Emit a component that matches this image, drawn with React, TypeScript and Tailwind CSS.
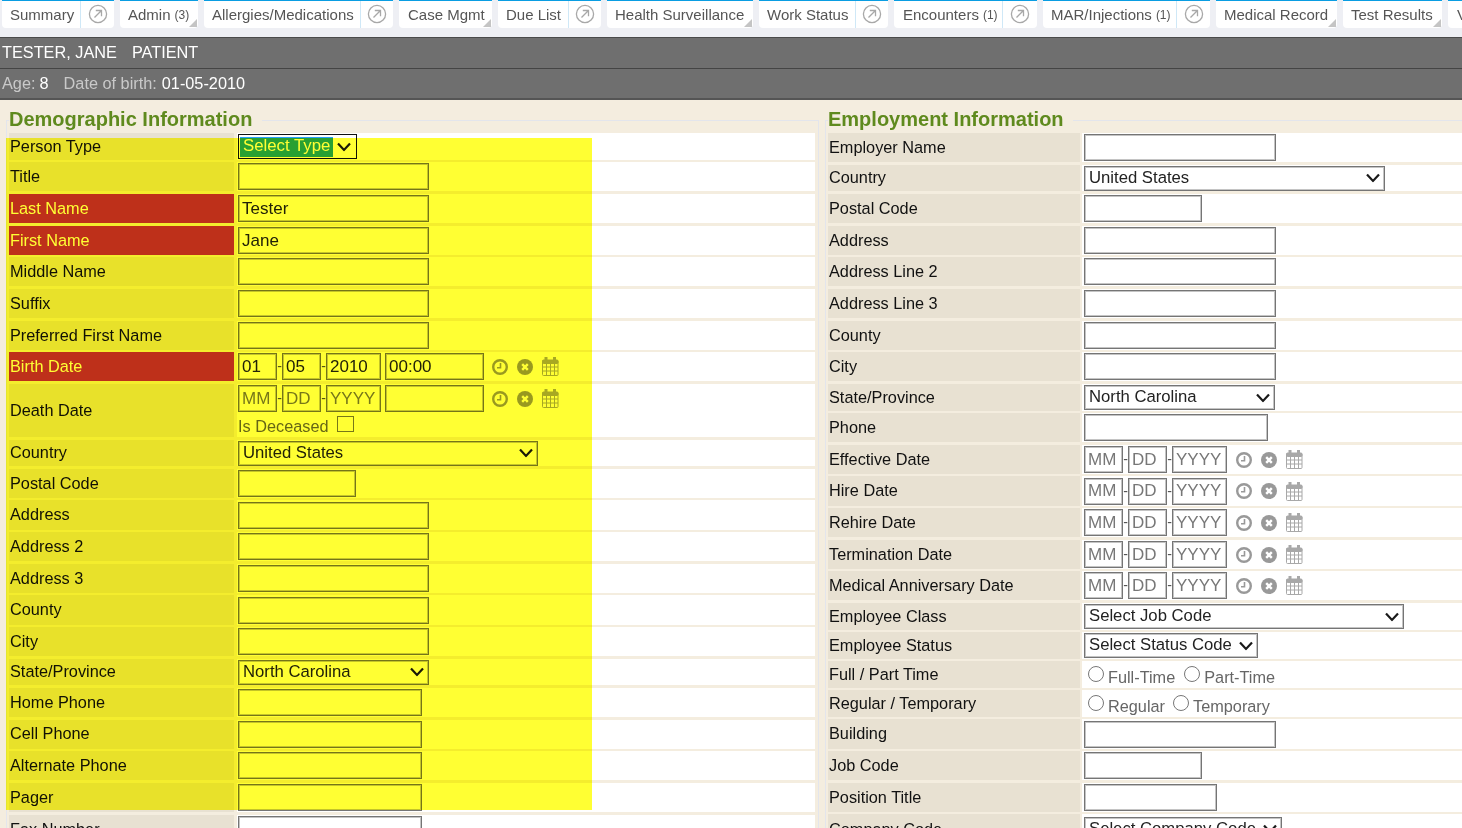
const FONT = "font-['Liberation_Sans',Arial,sans-serif]";

const tabs = [
  { label: 'Summary', w: 'w-[112px]', main: 'w-[79px]', pl: 'pl-[8px]', icon: true },
  { label: 'Admin', count: '(3)', w: 'w-[78px]', pl: 'pl-[8px]', menu: true },
  { label: 'Allergies/Medications', w: 'w-[189px]', main: 'w-[157px]', pl: 'pl-[8px]', icon: true },
  { label: 'Case Mgmt', w: 'w-[93px]', pl: 'pl-[9px]', menu: true },
  { label: 'Due List', w: 'w-[103px]', main: 'w-[71px]', pl: 'pl-[8px]', icon: true },
  { label: 'Health Surveillance', w: 'w-[146px]', pl: 'pl-[8px]', menu: true },
  { label: 'Work Status', w: 'w-[129px]', main: 'w-[97px]', pl: 'pl-[8px]', icon: true },
  { label: 'Encounters', count: '(1)', w: 'w-[143px]', main: 'w-[109px]', pl: 'pl-[9px]', icon: true },
  { label: 'MAR/Injections', count: '(1)', w: 'w-[167px]', main: 'w-[134px]', pl: 'pl-[8px]', icon: true },
  { label: 'Medical Record', w: 'w-[121px]', pl: 'pl-[8px]', menu: true },
  { label: 'Test Results', w: 'w-[99px]', pl: 'pl-[8px]', menu: true },
  { label: 'View', w: 'w-[100px]', pl: 'pl-[9px]' },
];

function OpenIcon() {
  return (
    <svg width="20" height="20" viewBox="0 0 20 20" fill="none" stroke="#a8a8a8" strokeWidth="1.3">
      <circle cx="10" cy="10" r="8.6" />
      <path d="M6.5 13.5 L13.2 6.8 M7.8 6.5 H13.5 V12.2" />
    </svg>
  );
}

function Tab({ t }: { t: (typeof tabs)[number] }) {
  return (
    <div className={`relative flex h-[28px] shrink-0 rounded-b-[4px] border-t border-[#0a9de2] bg-white text-[15px] text-[#555] ${t.w}`}>
      <div className={`flex h-full items-center whitespace-nowrap pt-[1px] ${t.pl} ${t.main ? `${t.main} border-r border-[#cfe8f7]` : ''}`}>
        {t.label}
        {t.count && <span className="ml-[4px] text-[12px]">{t.count}</span>}
      </div>
      {t.icon && (
        <div className="flex flex-1 items-center justify-center pb-[1px]">
          <OpenIcon />
        </div>
      )}
      {t.menu && (
        <svg className="absolute bottom-[1px] right-[1px]" width="8" height="8" viewBox="0 0 8 8">
          <polygon points="8,0 8,8 0,8" fill="#c4c4c4" />
        </svg>
      )}
    </div>
  );
}

function TextBox({ w, value, placeholder }: { w: string; value?: string; placeholder?: string }) {
  return (
    <input
      readOnly
      defaultValue={value}
      placeholder={placeholder}
      className={`h-[27px] shrink-0 border border-[#757575] bg-white pl-[3px] text-[17px] text-[#222] shadow-[inset_0_0_0_1px_#c4c4c4] outline-none placeholder:text-[#777] ${w}`}
    />
  );
}

function Chevron() {
  return (
    <svg className="pointer-events-none absolute right-[5px] top-1/2 -translate-y-1/2" width="14" height="9" viewBox="0 0 14 9" fill="none" stroke="#1a1a1a" strokeWidth="2.2">
      <path d="M1 1 L7 7.5 L13 1" />
    </svg>
  );
}

function Dropdown({ w, value }: { w: string; value: string }) {
  return (
    <div className={`relative h-[25px] shrink-0 ${w}`}>
      <select className="h-full w-full appearance-none rounded-none border border-[#757575] bg-white pl-[4px] text-[16.7px] leading-none text-[#222] shadow-[inset_0_0_0_1px_#c4c4c4] outline-none">
        <option>{value}</option>
      </select>
      <Chevron />
    </div>
  );
}

function ClockIcon() {
  return (
    <svg width="16" height="16" viewBox="0 0 16 16" fill="none" stroke="#999" strokeWidth="2.4">
      <circle cx="8" cy="8" r="6.8" />
      <path d="M8.5 4 V8.8 H5" strokeWidth="1.6" />
    </svg>
  );
}

function ClearIcon() {
  return (
    <svg width="16" height="16" viewBox="0 0 16 16">
      <circle cx="8" cy="8" r="8" fill="#999" />
      <path d="M5.2 5.2 L10.8 10.8 M10.8 5.2 L5.2 10.8" stroke="#fff" strokeWidth="2.4" />
    </svg>
  );
}

function CalendarIcon() {
  return (
    <svg width="17" height="19" viewBox="0 0 17 19" fill="none" stroke="#a8a8a8">
      <rect x="0.5" y="3.5" width="15.5" height="15" rx="1" fill="#fff" fillOpacity="0.2" />
      <rect x="0.5" y="3" width="15.5" height="3.5" rx="1" fill="#a8a8a8" />
      <path d="M0.5 10 H16 M0.5 14 H16 M4.5 6 V18.5 M8.5 6 V18.5 M12.5 6 V18.5" />
      <rect x="3" y="0.5" width="2" height="4" fill="#a8a8a8" />
      <rect x="11.5" y="0.5" width="2" height="4" fill="#a8a8a8" />
    </svg>
  );
}

function DateField({ m, d, y, time, gap }: { m?: string; d?: string; y?: string; time?: string | boolean; gap: string }) {
  return (
    <div className="flex items-center">
      <TextBox w="w-[39px]" value={m} placeholder="MM" />
      <span className="w-[5px] text-center text-[14px] text-[#555]">-</span>
      <TextBox w="w-[39px]" value={d} placeholder="DD" />
      <span className="w-[5px] text-center text-[14px] text-[#555]">-</span>
      <TextBox w="w-[55px]" value={y} placeholder="YYYY" />
      {time !== undefined && (
        <div className="ml-[4px]">
          <TextBox w="w-[99px]" value={typeof time === 'string' ? time : undefined} />
        </div>
      )}
      <div className={`flex items-center gap-[9px] ${gap}`}>
        <ClockIcon />
        <ClearIcon />
        <CalendarIcon />
      </div>
    </div>
  );
}

function Radios({ items, second }: { items: string[]; second: string }) {
  return (
    <div className="flex items-center text-[16.3px] text-[#666]">
      <input type="radio" readOnly className="mb-[2px] ml-[4px] h-[16px] w-[16px] appearance-none rounded-full border border-[#777] bg-white" />
      <span className="ml-[4px] mt-[5px]">{items[0]}</span>
      <input type="radio" readOnly className={`mb-[2px] h-[16px] w-[16px] appearance-none rounded-full border border-[#777] bg-white ${second}`} />
      <span className="ml-[4px] mt-[5px]">{items[1]}</span>
    </div>
  );
}

function Row({ label, size, labelW, valuePl, required, nudge, children }: { label: string; size: string; labelW: string; valuePl: string; required?: boolean; nudge?: boolean; children: React.ReactNode }) {
  return (
    <div className={`flex shrink-0 ${size}`}>
      <div className={`flex shrink-0 items-center pl-[1px] text-[16.3px] ${labelW} ${nudge ? 'pb-[2px]' : ''} ${required ? 'bg-[#be3082] text-white' : 'bg-[#e8e1d2] text-[#111]'}`}>
        {label}
      </div>
      <div className={`flex min-w-0 flex-1 flex-col justify-center bg-white ${valuePl}`}>{children}</div>
    </div>
  );
}

function Left({ label, size, required, nudge, children }: { label: string; size: string; required?: boolean; nudge?: boolean; children: React.ReactNode }) {
  return (
    <Row label={label} size={size} labelW="w-[225px] mr-[3px]" valuePl="pl-[1px]" required={required} nudge={nudge}>
      {children}
    </Row>
  );
}

function Right({ label, size, nudge, children }: { label: string; size: string; nudge?: boolean; children: React.ReactNode }) {
  return (
    <Row label={label} size={size} labelW="w-[252px] mr-[2px]" valuePl="pl-[2px]" nudge={nudge}>
      {children}
    </Row>
  );
}

function Section({ title, className, legendPad, children }: { title: string; className: string; legendPad: string; children: React.ReactNode }) {
  return (
    <fieldset className={`mt-[8px] min-w-0 shrink-0 border border-b-0 border-[#e3e5ec] pl-[2px] ${className}`}>
      <legend className={`h-[25px] text-[20px] font-bold leading-[23px] text-[#5f8a1e] ${legendPad}`}>{title}</legend>
      {children}
    </fieldset>
  );
}

export default function App() {
  return (
    <div className={`relative h-[828px] w-[1462px] overflow-hidden bg-[#f4eddf] ${FONT}`}>
      <div className="flex h-[37px] gap-[6px] overflow-hidden bg-[#eeeff4] pl-[2px]">
        {tabs.map(t => (
          <Tab key={t.label} t={t} />
        ))}
      </div>

      <div className="flex h-[32px] items-center border-t border-b border-t-[#4a4a4a] border-b-[#444] bg-[#6f6f6f] pb-[2px] pl-[2px] text-[16.3px] text-white">
        <span>TESTER, JANE</span>
        <span className="ml-[15px]">PATIENT</span>
      </div>
      <div className="flex h-[31px] items-center border-b-2 border-b-[#555] bg-[#6f6f6f] pl-[2px] text-[16.3px] text-white">
        <span className="text-[#c9c9c9]">Age:</span>
        <span className="ml-[4px]">8</span>
        <span className="ml-[15px] text-[#c9c9c9]">Date of birth:</span>
        <span className="ml-[5px]">01-05-2010</span>
      </div>

      <div className="relative ml-[6px] flex gap-[6px]">
        <Section title="Demographic Information" className="w-[813px] pr-[3px]" legendPad="pr-[10px]">
          <div className="flex flex-col">
            <Left label="Person Type" size="h-[27px] mb-[2px]">
              <div className="relative flex h-[25px] w-[119px] items-center border border-[#111] bg-white pl-[1px]">
                <select className="h-[20px] w-[93px] appearance-none rounded-none bg-[#28a0fa] pl-[3px] text-[16.8px] leading-none text-white outline-none">
                  <option>Select Type</option>
                </select>
                <Chevron />
              </div>
            </Left>
            <Left label="Title" size="h-[29px] mb-[3px]"><TextBox w="w-[191px]" /></Left>
            <Left label="Last Name" size="h-[29px] mb-[3px]" required><TextBox w="w-[191px]" value="Tester" /></Left>
            <Left label="First Name" size="h-[29px] mb-[2px]" required><TextBox w="w-[191px]" value="Jane" /></Left>
            <Left label="Middle Name" size="h-[29px] mb-[3px]"><TextBox w="w-[191px]" /></Left>
            <Left label="Suffix" size="h-[29px] mb-[3px]"><TextBox w="w-[191px]" /></Left>
            <Left label="Preferred First Name" size="h-[29px] mb-[2px]"><TextBox w="w-[191px]" /></Left>
            <Left label="Birth Date" size="h-[29px] mb-[3px]" required>
              <DateField m="01" d="05" y="2010" time="00:00" gap="ml-[8px]" />
            </Left>
            <Left label="Death Date" size="h-[53px] mb-[3px]">
              <div className="flex h-full flex-col pt-[1px]">
                <DateField time gap="ml-[8px]" />
                <div className="mt-[2px] flex items-center text-[16.3px] text-[#666]">
                  Is Deceased
                  <span className="mb-[5px] ml-[8px] h-[16px] w-[17px] border border-[#777] bg-white" />
                </div>
              </div>
            </Left>
            <Left label="Country" size="h-[26px] mb-[3px]" nudge><Dropdown w="w-[300px]" value="United States" /></Left>
            <Left label="Postal Code" size="h-[29px] mb-[2px]"><TextBox w="w-[118px]" /></Left>
            <Left label="Address" size="h-[30px] mb-[2px]" nudge><TextBox w="w-[191px]" /></Left>
            <Left label="Address 2" size="h-[29px] mb-[3px]"><TextBox w="w-[191px]" /></Left>
            <Left label="Address 3" size="h-[29px] mb-[2px]"><TextBox w="w-[191px]" /></Left>
            <Left label="County" size="h-[30px] mb-[2px]" nudge><TextBox w="w-[191px]" /></Left>
            <Left label="City" size="h-[29px] mb-[3px]"><TextBox w="w-[191px]" /></Left>
            <Left label="State/Province" size="h-[26px] mb-[3px]" nudge><Dropdown w="w-[191px]" value="North Carolina" /></Left>
            <Left label="Home Phone" size="h-[29px] mb-[3px]"><TextBox w="w-[184px]" /></Left>
            <Left label="Cell Phone" size="h-[29px] mb-[2px]" nudge><TextBox w="w-[184px]" /></Left>
            <Left label="Alternate Phone" size="h-[29px] mb-[3px]"><TextBox w="w-[184px]" /></Left>
            <Left label="Pager" size="h-[29px] mb-[3px]"><TextBox w="w-[184px]" /></Left>
            <Left label="Fax Number" size="h-[29px]"><TextBox w="w-[184px]" /></Left>
          </div>
        </Section>

        <Section title="Employment Information" className="w-[637px] border-r-0" legendPad="pr-[9px]">
          <div className="flex flex-col">
            <Right label="Employer Name" size="h-[29px] mb-[3px]"><TextBox w="w-[192px]" /></Right>
            <Right label="Country" size="h-[26px] mb-[3px]" nudge><Dropdown w="w-[301px]" value="United States" /></Right>
            <Right label="Postal Code" size="h-[29px] mb-[3px]"><TextBox w="w-[118px]" /></Right>
            <Right label="Address" size="h-[29px] mb-[2px]"><TextBox w="w-[192px]" /></Right>
            <Right label="Address Line 2" size="h-[29px] mb-[3px]"><TextBox w="w-[192px]" /></Right>
            <Right label="Address Line 3" size="h-[29px] mb-[3px]"><TextBox w="w-[192px]" /></Right>
            <Right label="County" size="h-[29px] mb-[2px]"><TextBox w="w-[192px]" /></Right>
            <Right label="City" size="h-[29px] mb-[3px]"><TextBox w="w-[192px]" /></Right>
            <Right label="State/Province" size="h-[27px] mb-[2px]"><Dropdown w="w-[191px]" value="North Carolina" /></Right>
            <Right label="Phone" size="h-[29px] mb-[3px]"><TextBox w="w-[184px]" /></Right>
            <Right label="Effective Date" size="h-[29px] mb-[2px]"><DateField gap="ml-[9px]" /></Right>
            <Right label="Hire Date" size="h-[30px] mb-[2px]" nudge><DateField gap="ml-[9px]" /></Right>
            <Right label="Rehire Date" size="h-[29px] mb-[3px]"><DateField gap="ml-[9px]" /></Right>
            <Right label="Termination Date" size="h-[29px] mb-[2px]"><DateField gap="ml-[9px]" /></Right>
            <Right label="Medical Anniversary Date" size="h-[29px] mb-[3px]"><DateField gap="ml-[9px]" /></Right>
            <Right label="Employee Class" size="h-[27px] mb-[2px]"><Dropdown w="w-[320px]" value="Select Job Code" /></Right>
            <Right label="Employee Status" size="h-[27px] mb-[2px]"><Dropdown w="w-[174px]" value="Select Status Code" /></Right>
            <Right label="Full / Part Time" size="h-[27px] mb-[2px]"><Radios items={['Full-Time', 'Part-Time']} second="ml-[9px]" /></Right>
            <Right label="Regular / Temporary" size="h-[27px] mb-[2px]"><Radios items={['Regular', 'Temporary']} second="ml-[8px]" /></Right>
            <Right label="Building" size="h-[30px] mb-[2px]" nudge><TextBox w="w-[192px]" /></Right>
            <Right label="Job Code" size="h-[29px] mb-[3px]"><TextBox w="w-[118px]" /></Right>
            <Right label="Position Title" size="h-[29px] mb-[2px]"><TextBox w="w-[133px]" /></Right>
            <Right label="Company Code" size="h-[30px]"><Dropdown w="w-[198px]" value="Select Company Code" /></Right>
          </div>
        </Section>

        {/* highlight laid over the demographic block */}
        <div className="pointer-events-none absolute left-0 top-[38px] h-[672px] w-[586px] bg-[#ffff00cc] mix-blend-multiply" />
      </div>
    </div>
  );
}
